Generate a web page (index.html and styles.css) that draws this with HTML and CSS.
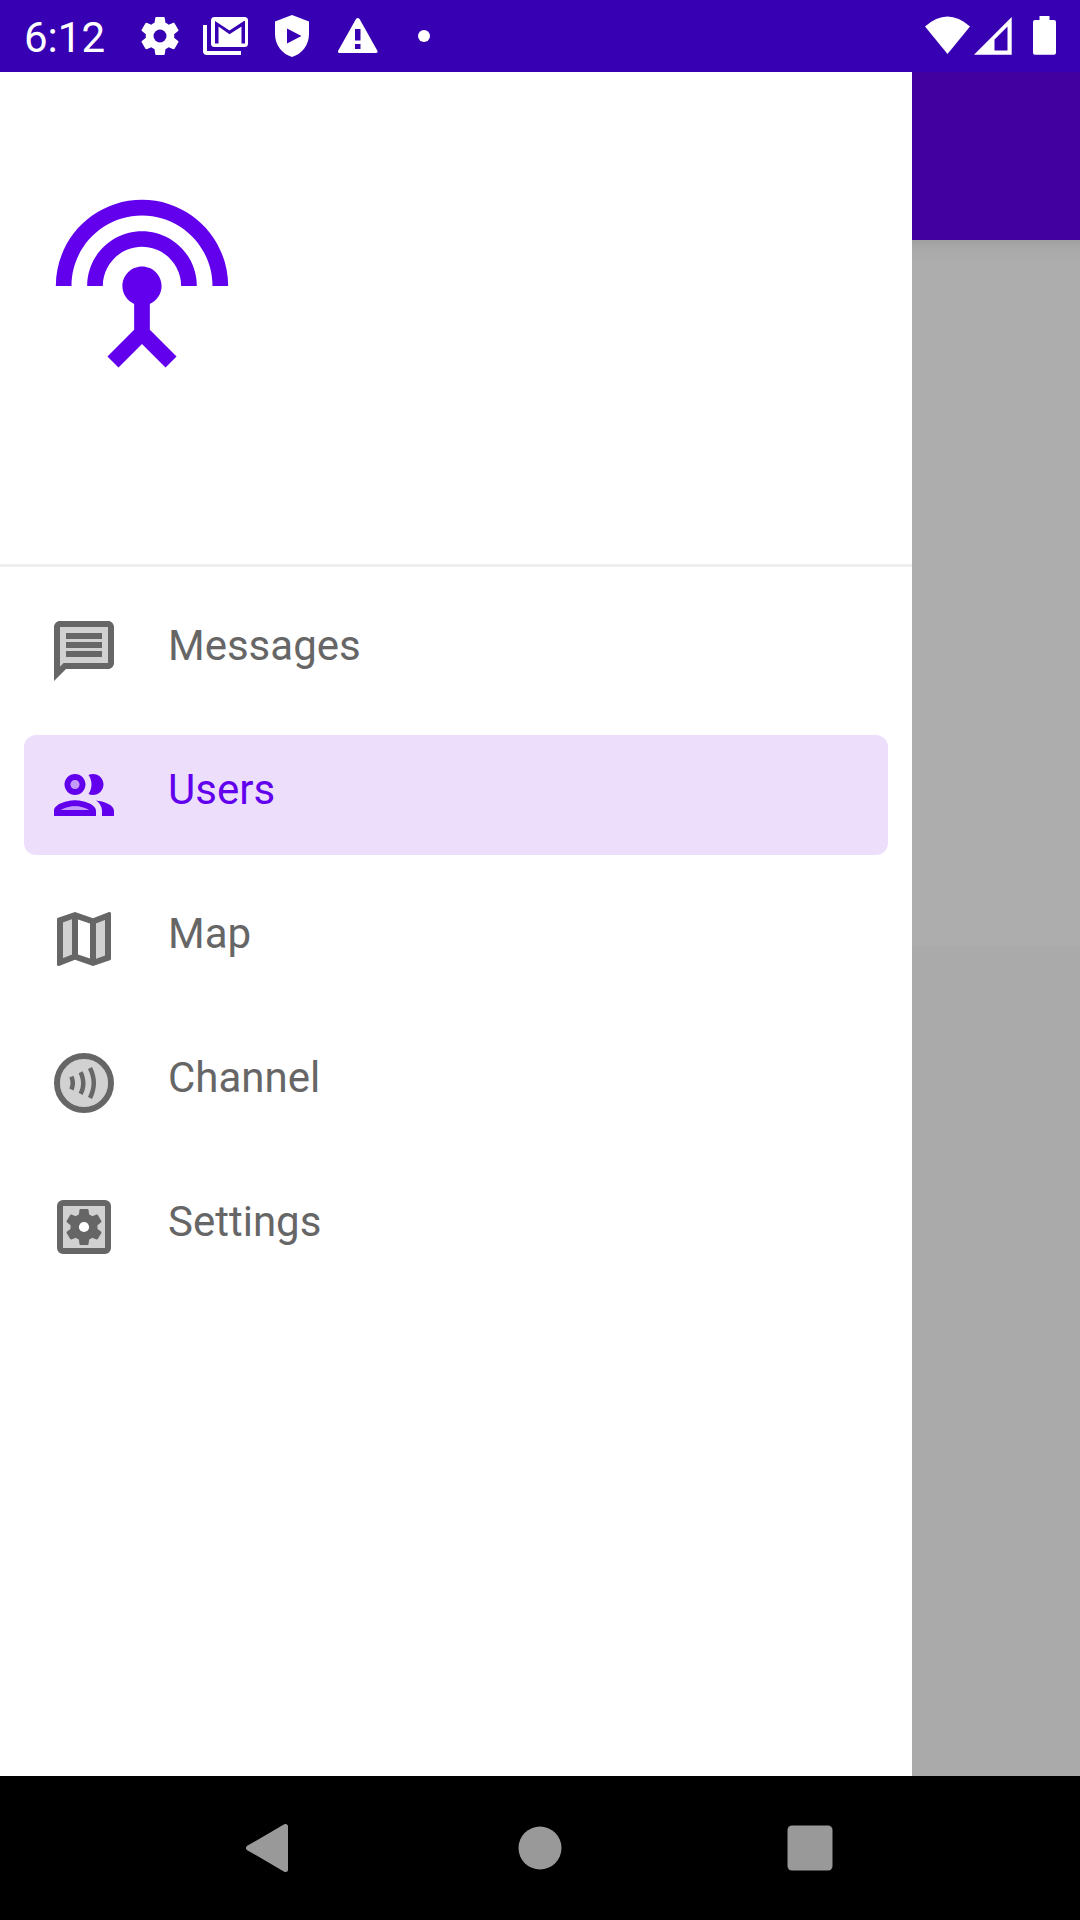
FILE: index.html
```html
<!DOCTYPE html>
<html lang="en">
<head>
<meta charset="utf-8">
<title>Users</title>
<link rel="stylesheet" href="styles.css">
</head>
<body>
<svg class="defs" width="0" height="0">
  <symbol id="gear" viewBox="2 2 20 20"><path d="M19.43 12.98c.04-.32.07-.64.07-.98s-.03-.66-.07-.98l2.11-1.65c.19-.15.24-.42.12-.64l-2-3.46c-.12-.22-.39-.3-.61-.22l-2.49 1c-.52-.4-1.08-.73-1.69-.98l-.38-2.65C14.46 2.18 14.25 2 14 2h-4c-.25 0-.46.18-.49.42l-.38 2.65c-.61.25-1.17.59-1.69.98l-2.49-1c-.23-.09-.49 0-.61.22l-2 3.46c-.13.22-.07.49.12.64l2.11 1.65c-.04.32-.07.65-.07.98s.03.66.07.98l-2.11 1.65c-.19.15-.24.42-.12.64l2 3.46c.12.22.39.3.61.22l2.49-1c.52.4 1.08.73 1.69.98l.38 2.65c.03.24.24.42.49.42h4c.25 0 .46-.18.49-.42l.38-2.65c.61-.25 1.17-.59 1.69-.98l2.49 1c.23.09.49 0 .61-.22l2-3.46c.12-.22.07-.49-.12-.64l-2.11-1.65z"/></symbol>
</svg>
<header class="status">
  <span class="clock">6:12</span>
  <svg class="notifications" viewBox="130 0 310 72" width="310" height="72">
    <use href="#gear" x="141" y="17" width="38" height="38"/>
    <circle class="cutout" cx="160" cy="36" r="6.5"/>
    <path d="M203 25h4v26h34v4h-34q-4 0-4-4z"/>
    <rect x="211" y="17" width="37" height="30" rx="3.500"/>
    <path class="cutout" d="M215 21l14.500 9.500L244 21h1v22.500h-3.500V26.500L229.500 34.300 218.500 26.500v17H215z"/>
    <path d="M292 15l17 6.500V34c0 11-7 20-17 23-10-3-17-12-17-23V21.500z"/>
    <path class="cutout" d="M287 28.500L301.500 36 287 43.500z"/>
    <path d="M356 19q1.800-2.200 3.600 0L377.500 51q.6 2-1.500 2h-36.500q-2 0-1.500-2z"/>
    <path class="cutout" d="M355 29h5.500v11.500H355zM355 44h5.500v5H355z"/>
    <circle cx="424" cy="36" r="6"/>
  </svg>
  <svg class="system" viewBox="920 0 140 72" width="140" height="72">
    <path d="M925 26.500Q947.500 6.500 970 26.500L947.500 54z"/>
    <path fill-rule="evenodd" d="M974 54.700L1011.700 17v37.700zM994.500 39.500V50.500H1007.500V26.500z"/>
    <path d="M1039.500 16h10v4h4.500q2 0 2 2v30.700q0 2-2 2h-19q-2 0-2-2V22q0-2 2-2h4.500z"/>
  </svg>
</header>
<main class="screen">
  <aside class="drawer">
    <div class="drawer-header">
      <svg class="logo" viewBox="0 0 24 24"><path d="M12 5c-3.870 0-7 3.130-7 7h2c0-2.760 2.240-5 5-5s5 2.240 5 5h2c0-3.870-3.130-7-7-7zm1 9.290c.88-.39 1.500-1.260 1.500-2.290 0-1.380-1.120-2.500-2.500-2.500S9.500 10.620 9.500 12c0 1.020.62 1.900 1.500 2.290v3.300L7.590 21 9 22.410l3-3 3 3L16.410 21 13 17.590v-3.300zM12 1C5.930 1 1 5.930 1 12h2c0-4.970 4.030-9 9-9s9 4.030 9 9h2c0-6.070-4.930-11-11-11z"/></svg>
    </div>
    <nav class="menu">
      <a class="item">
        <svg class="icon" viewBox="0 0 24 24"><path class="tint" d="M4 17.170L5.170 16H20V4H4z"/><path fill-rule="evenodd" d="M4 2h16c1.100 0 2 .9 2 2v12c0 1.100-.9 2-2 2H6l-4 4V4c0-1.100.9-2 2-2zM4 17.170L5.170 16H20V4H4z"/><path d="M6 6h12v2H6zM6 9h12v2H6zM6 12h12v2H6z"/></svg>
        <span class="label">Messages</span>
      </a>
      <a class="item selected">
        <svg class="icon" viewBox="0 0 24 24"><circle class="tint" cx="9" cy="8.500" r="1.500"/><path class="tint" d="M4.340 17h9.320c-.84-.58-2.870-1.250-4.660-1.250s-3.820.67-4.660 1.250z"/><path d="M9 12c1.930 0 3.500-1.570 3.500-3.500S10.930 5 9 5 5.500 6.570 5.500 8.500 7.070 12 9 12zm0-5c.83 0 1.500.67 1.500 1.500S9.830 10 9 10s-1.500-.67-1.500-1.500S8.170 7 9 7zm0 6.750c-2.340 0-7 1.170-7 3.500V19h14v-1.750c0-2.330-4.660-3.500-7-3.500zM4.340 17c.84-.58 2.870-1.250 4.660-1.250s3.820.67 4.660 1.250H4.340zm11.700-3.190c1.160.84 1.960 1.960 1.960 3.440V19h4v-1.750c0-2.020-3.500-3.170-5.960-3.440zM15 12c1.930 0 3.500-1.570 3.500-3.500S16.930 5 15 5c-.54 0-1.040.13-1.500.35.63.89 1 1.980 1 3.150s-.37 2.260-1 3.150c.46.22.96.35 1.500.35z"/></svg>
        <span class="label">Users</span>
      </a>
      <a class="item">
        <svg class="icon" viewBox="0 0 24 24"><path class="tint" d="M5 18.310l3-1.160V5.450L5 6.460zM16 18.550l3-1.010V5.700l-3 1.160z"/><path d="M20.500 3l-.16.030L15 5.100 9 3 3.360 4.900c-.21.07-.36.25-.36.48V20.500c0 .28.22.5.5.5l.16-.03L9 18.900l6 2.100 5.640-1.900c.21-.07.36-.25.36-.48V3.500c0-.28-.22-.5-.5-.5zM10 5.470l4 1.400v11.660l-4-1.400V5.470zm-5 .99l3-1.010v11.700l-3 1.160V6.460zm14 11.080l-3 1.010V6.860l3-1.160v11.840z"/></svg>
        <span class="label">Map</span>
      </a>
      <a class="item">
        <svg class="icon" viewBox="0 0 24 24"><circle class="tint" cx="12" cy="12" r="8"/><circle class="ring" cx="12" cy="12" r="9"/><path d="M7.100 10.180c.26.56.39 1.160.4 1.800.01.63-.13 1.250-.4 1.860l1.370.62c.37-.81.55-1.650.54-2.500-.01-.84-.19-1.650-.54-2.400l-1.370.62zM13.330 7.330c.78 1.570 1.180 3.140 1.180 4.640s-.4 3.090-1.180 4.690l1.350.66c.88-1.810 1.330-3.610 1.330-5.350s-.45-3.500-1.330-5.310l-1.350.67zM10.200 8.720c.53 1.070.8 2.210.8 3.400 0 1.170-.26 2.230-.78 3.150l1.300.74c.65-1.150.98-2.460.98-3.890 0-1.420-.32-2.790-.96-4.070l-1.340.67z"/></svg>
        <span class="label">Channel</span>
      </a>
      <a class="item">
        <svg class="icon" viewBox="0 0 24 24"><path class="tint" d="M5 5h14v14H5z"/><rect class="ring" x="4" y="4" width="16" height="16" rx="1"/><use href="#gear" x="6" y="6" width="12" height="12"/><circle class="hole" cx="12" cy="12" r="1.700"/></svg>
        <span class="label">Settings</span>
      </a>
    </nav>
  </aside>
  <section class="content">
    <div class="appbar"></div>
    <div class="pane upper"></div>
    <div class="pane lower"></div>
  </section>
</main>
<footer class="navbar">
  <svg viewBox="0 0 1080 144" width="1080" height="144"><path class="back" d="M248.500 72L285.500 50.500v43z"/><circle cx="540" cy="72" r="21.500"/><rect x="787.500" y="49.500" width="45" height="45" rx="4.500"/></svg>
</footer>
</body>
</html>
```
FILE: styles.css
```css
* { box-sizing: border-box; }
body {
  margin: 0;
  width: 1080px;
  height: 1920px;
  display: flex;
  flex-direction: column;
  overflow: hidden;
  background: #fff;
  font-family: Roboto, "Liberation Sans", sans-serif;
}
svg { display: block; flex: none; }
.defs { display: none; }
.status {
  height: 72px;
  flex: none;
  display: flex;
  align-items: center;
  background: #3700b3;
  color: #fff;
  fill: #fff;
}
.clock {
  width: 106px;
  margin-left: 24px;
  font-size: 42px;
  line-height: 48px;
  padding-top: 4px;
}
.cutout { fill: #3700b3; }
.system { margin-left: auto; margin-right: 20px; }
.screen { flex: 1; display: flex; }
.drawer { width: 912px; background: #fff; }
.drawer-header {
  height: 495px;
  padding: 120px 48px 0;
  border-bottom: 3px solid #eee;
}
.logo { width: 188px; height: 188px; fill: #6200ee; }
.menu {
  display: flex;
  flex-direction: column;
  gap: 24px;
  padding: 24px;
}
.item {
  height: 120px;
  display: flex;
  align-items: center;
  gap: 48px;
  padding: 0 24px;
  border-radius: 12px;
  color: #666;
  fill: #666;
}
.selected { background: #eddffc; color: #6200ee; fill: #6200ee; }
.icon { width: 72px; height: 72px; }
.tint { opacity: .3; }
.ring { fill: none; stroke: #666; stroke-width: 2; }
.hole { fill: #fff; }
.label {
  font-size: 42px;
  line-height: 56px;
  padding-bottom: 10px;
}
.content { flex: 1; display: flex; flex-direction: column; }
.appbar { height: 168px; background: #4200a0; }
.pane { background: #adadad; }
.upper { height: 706px; background: linear-gradient(#a0a0a0, #a9a9a9 10px, #adadad 22px); }
.lower { flex: 1; background: #aaa; }
.navbar { height: 144px; flex: none; background: #000; fill: #999; }
.back { stroke: #999; stroke-width: 5; stroke-linejoin: round; }
```
